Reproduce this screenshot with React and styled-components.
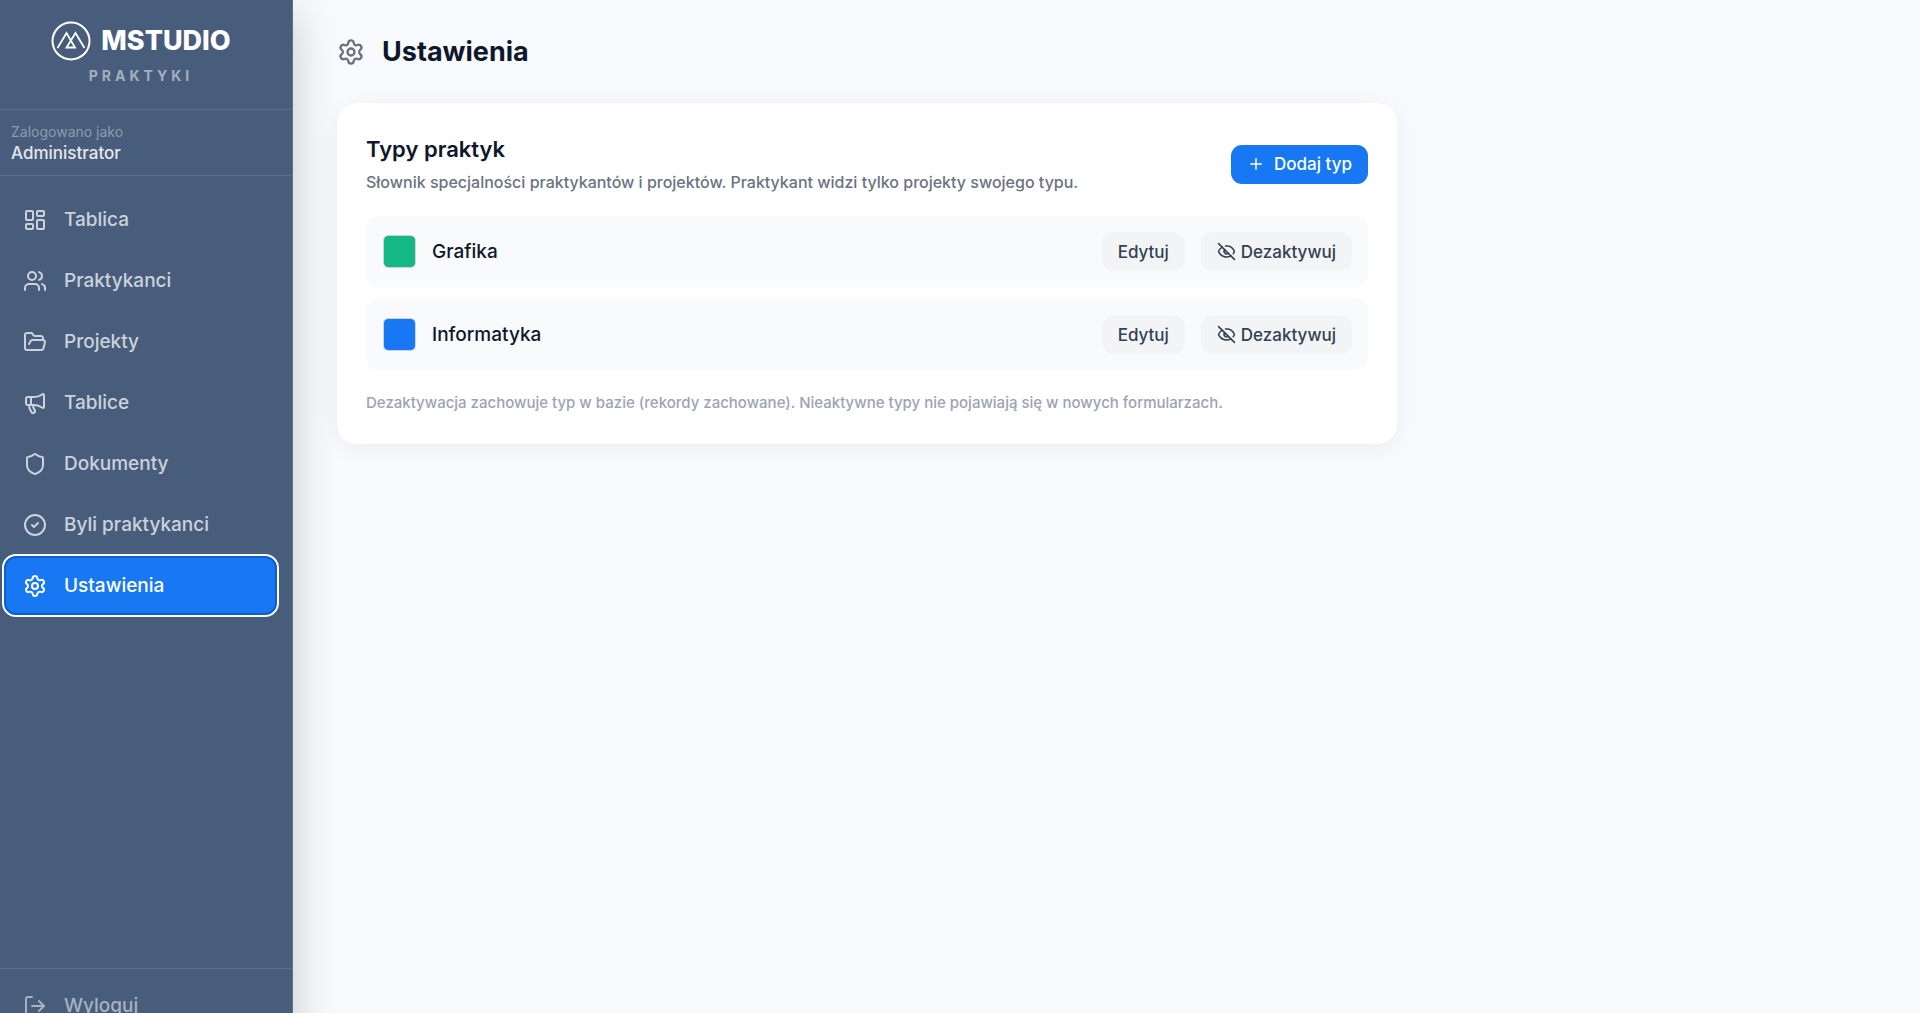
import React from "react";
import styled, { createGlobalStyle } from "styled-components";
import {
  CircleCheck,
  EyeOff,
  FolderOpen,
  LayoutDashboard,
  LogOut,
  Megaphone,
  Plus,
  Settings,
  Shield,
  Users
} from "lucide-react";

const GlobalStyle = createGlobalStyle`
  *, *::before, *::after {
    box-sizing: border-box;
  }
  body {
    margin: 0;
    background: #f9fafd;
    color: #0f172a;
    font-family: Inter, "Liberation Sans", sans-serif;
    font-size: 16px;
  }
  h1, h2, p, ul {
    margin: 0;
    padding: 0;
  }
  button {
    font-family: inherit;
    cursor: pointer;
  }
`;

const Shell = styled.div`
  display: flex;
  align-items: flex-start;
  height: 100vh;
  overflow: hidden;
`;

const Sidebar = styled.aside`
  display: flex;
  flex-direction: column;
  flex: 0 0 293px;
  height: calc(100vh + 28px);
  background: #485d7b;
  border-right: 1px solid #5c7096;
  box-shadow: 0 12px 44px rgba(0, 0, 0, 0.2);
`;

const Brand = styled.div`
  display: flex;
  flex-direction: column;
  align-items: center;
  height: 110px;
  padding: 21px 10px 0 0;
  border-bottom: 1px solid #5b6f8c;
`;

const Logo = styled.div`
  display: flex;
  align-items: center;
  gap: 10px;
  height: 40px;
`;

const LogoText = styled.span`
  color: #ffffff;
  font-size: 27px;
  font-weight: 800;
  line-height: 40px;
`;

const BrandSub = styled.span`
  margin-top: 6px;
  color: #a3afbf;
  font-size: 14px;
  font-weight: 700;
  line-height: 18px;
  letter-spacing: 4px;
`;

const Account = styled.div`
  height: 66px;
  padding: 12px 11px;
  border-bottom: 1px solid #5b6f8c;
`;

const AccountLabel = styled.p`
  color: #8e9bae;
  font-size: 14px;
  line-height: 20px;
`;

const AccountName = styled.p`
  color: #e4e8ee;
  font-size: 17px;
  font-weight: 500;
  line-height: 22px;
`;

const Nav = styled.nav`
  flex: 1;
  padding: 13px 14px 0 3px;
`;

const NavList = styled.ul`
  list-style: none;
`;

const NavLink = styled.a`
  display: flex;
  align-items: center;
  gap: 17px;
  height: 61px;
  padding: 0 20px;
  border-radius: 13px;
  color: ${({ $active }) => ($active ? "#ffffff" : "#cbd2dc")};
  background: ${({ $active }) => ($active ? "#1877f2" : "transparent")};
  outline: ${({ $active }) => ($active ? "2px solid #ffffff" : "none")};
  outline-offset: -1px;
  box-shadow: ${({ $active }) => ($active ? "inset 0 0 0 3px #0b5fcc" : "none")};
  font-size: 19px;
  font-weight: 500;
  text-decoration: none;
`;

const SidebarFooter = styled.div`
  padding: 6px 14px 5px 3px;
  border-top: 1px solid #5b6f8c;
`;

const LogoutButton = styled.button`
  display: flex;
  align-items: center;
  gap: 17px;
  width: 100%;
  height: 61px;
  padding: 0 20px;
  border: 0;
  background: transparent;
  color: #a7b2c2;
  font-size: 19px;
  font-weight: 500;
`;

const Main = styled.main`
  flex: 1;
  min-width: 0;
  padding: 32px 44px;
`;

const PageHeader = styled.header`
  display: flex;
  align-items: center;
  gap: 17px;
  height: 39px;
  margin-bottom: 32px;
  color: #6b7280;
`;

const PageTitle = styled.h1`
  color: #0f172a;
  font-size: 27px;
  font-weight: 700;
  line-height: 40px;
`;

const Card = styled.section`
  max-width: 1060px;
  padding: 29px;
  border-radius: 20px;
  background: #ffffff;
  box-shadow: 0 4px 24px rgba(0, 0, 0, 0.06);
`;

const CardHeader = styled.div`
  display: flex;
  align-items: center;
  justify-content: space-between;
  gap: 24px;
  margin-bottom: 20px;
`;

const CardTitle = styled.h2`
  font-size: 22px;
  font-weight: 600;
  line-height: 34px;
`;

const CardText = styled.p`
  margin-top: 3px;
  color: #6b7280;
  font-size: 16px;
  font-weight: 500;
  line-height: 27px;
`;

const PrimaryButton = styled.button`
  display: flex;
  align-items: center;
  gap: 9px;
  height: 39px;
  padding: 0 16px;
  border: 0;
  border-radius: 11px;
  background: #1877f2;
  color: #ffffff;
  font-size: 17px;
  font-weight: 500;
`;

const TypeList = styled.ul`
  display: flex;
  flex-direction: column;
  gap: 12px;
  list-style: none;
`;

const TypeRow = styled.li`
  display: flex;
  align-items: center;
  gap: 16px;
  height: 71px;
  padding: 0 16px 0 17px;
  border-radius: 12px;
  background: #f9fafc;
`;

const Swatch = styled.span`
  width: 33px;
  height: 33px;
  border: 1px solid #cfd3da;
  border-radius: 5px;
  background: ${({ $color }) => $color} padding-box;
`;

const TypeName = styled.span`
  flex: 1;
  font-size: 19px;
  font-weight: 500;
`;

const SoftButton = styled.button`
  display: flex;
  align-items: center;
  gap: 5px;
  height: 39px;
  padding: 0 16px;
  border: 0;
  border-radius: 12px;
  background: #f3f4f6;
  color: #334155;
  font-size: 17px;
  font-weight: 500;
`;

const CardNote = styled.p`
  margin-top: 21px;
  color: #9ca3b3;
  font-size: 15px;
  font-weight: 500;
  line-height: 24px;
`;

const navItems = [
  { label: "Tablica", icon: LayoutDashboard },
  { label: "Praktykanci", icon: Users },
  { label: "Projekty", icon: FolderOpen },
  { label: "Tablice", icon: Megaphone },
  { label: "Dokumenty", icon: Shield },
  { label: "Byli praktykanci", icon: CircleCheck },
  { label: "Ustawienia", icon: Settings, active: true }
];

const internshipTypes = [
  { name: "Grafika", color: "#14b882" },
  { name: "Informatyka", color: "#1877f2" }
];

const LogoMark = () => (
  <svg width="40" height="40" viewBox="0 0 40 40" fill="none" stroke="#ffffff" strokeWidth="2" aria-hidden="true">
    <circle cx="20" cy="20" r="18.5" />
    <path d="M6.5 27 15.5 12 24 26.5H15.5L24.5 12 33.5 27" strokeWidth="1.8" />
  </svg>
);

const App = () => (
  <Shell>
    <GlobalStyle />
    <Sidebar>
      <Brand>
        <Logo>
          <LogoMark />
          <LogoText>MSTUDIO</LogoText>
        </Logo>
        <BrandSub>PRAKTYKI</BrandSub>
      </Brand>
      <Account>
        <AccountLabel>Zalogowano jako</AccountLabel>
        <AccountName>Administrator</AccountName>
      </Account>
      <Nav>
        <NavList>
          {navItems.map(({ label, icon: Icon, active }) => (
            <li key={label}>
              <NavLink href="#" $active={active} aria-current={active ? "page" : undefined}>
                <Icon size={24} strokeWidth={2} />
                {label}
              </NavLink>
            </li>
          ))}
        </NavList>
      </Nav>
      <SidebarFooter>
        <LogoutButton type="button">
          <LogOut size={24} strokeWidth={2} />
          Wyloguj
        </LogoutButton>
      </SidebarFooter>
    </Sidebar>
    <Main>
      <PageHeader>
        <Settings size={28} strokeWidth={2} />
        <PageTitle>Ustawienia</PageTitle>
      </PageHeader>
      <Card>
        <CardHeader>
          <div>
            <CardTitle>Typy praktyk</CardTitle>
            <CardText>
              Słownik specjalności praktykantów i projektów. Praktykant widzi tylko projekty swojego typu.
            </CardText>
          </div>
          <PrimaryButton type="button">
            <Plus size={18} strokeWidth={2} />
            Dodaj typ
          </PrimaryButton>
        </CardHeader>
        <TypeList>
          {internshipTypes.map(({ name, color }) => (
            <TypeRow key={name}>
              <Swatch $color={color} />
              <TypeName>{name}</TypeName>
              <SoftButton type="button">Edytuj</SoftButton>
              <SoftButton type="button">
                <EyeOff size={19} strokeWidth={2} />
                Dezaktywuj
              </SoftButton>
            </TypeRow>
          ))}
        </TypeList>
        <CardNote>
          Dezaktywacja zachowuje typ w bazie (rekordy zachowane). Nieaktywne typy nie pojawiają się w nowych formularzach.
        </CardNote>
      </Card>
    </Main>
  </Shell>
);

export default App;
